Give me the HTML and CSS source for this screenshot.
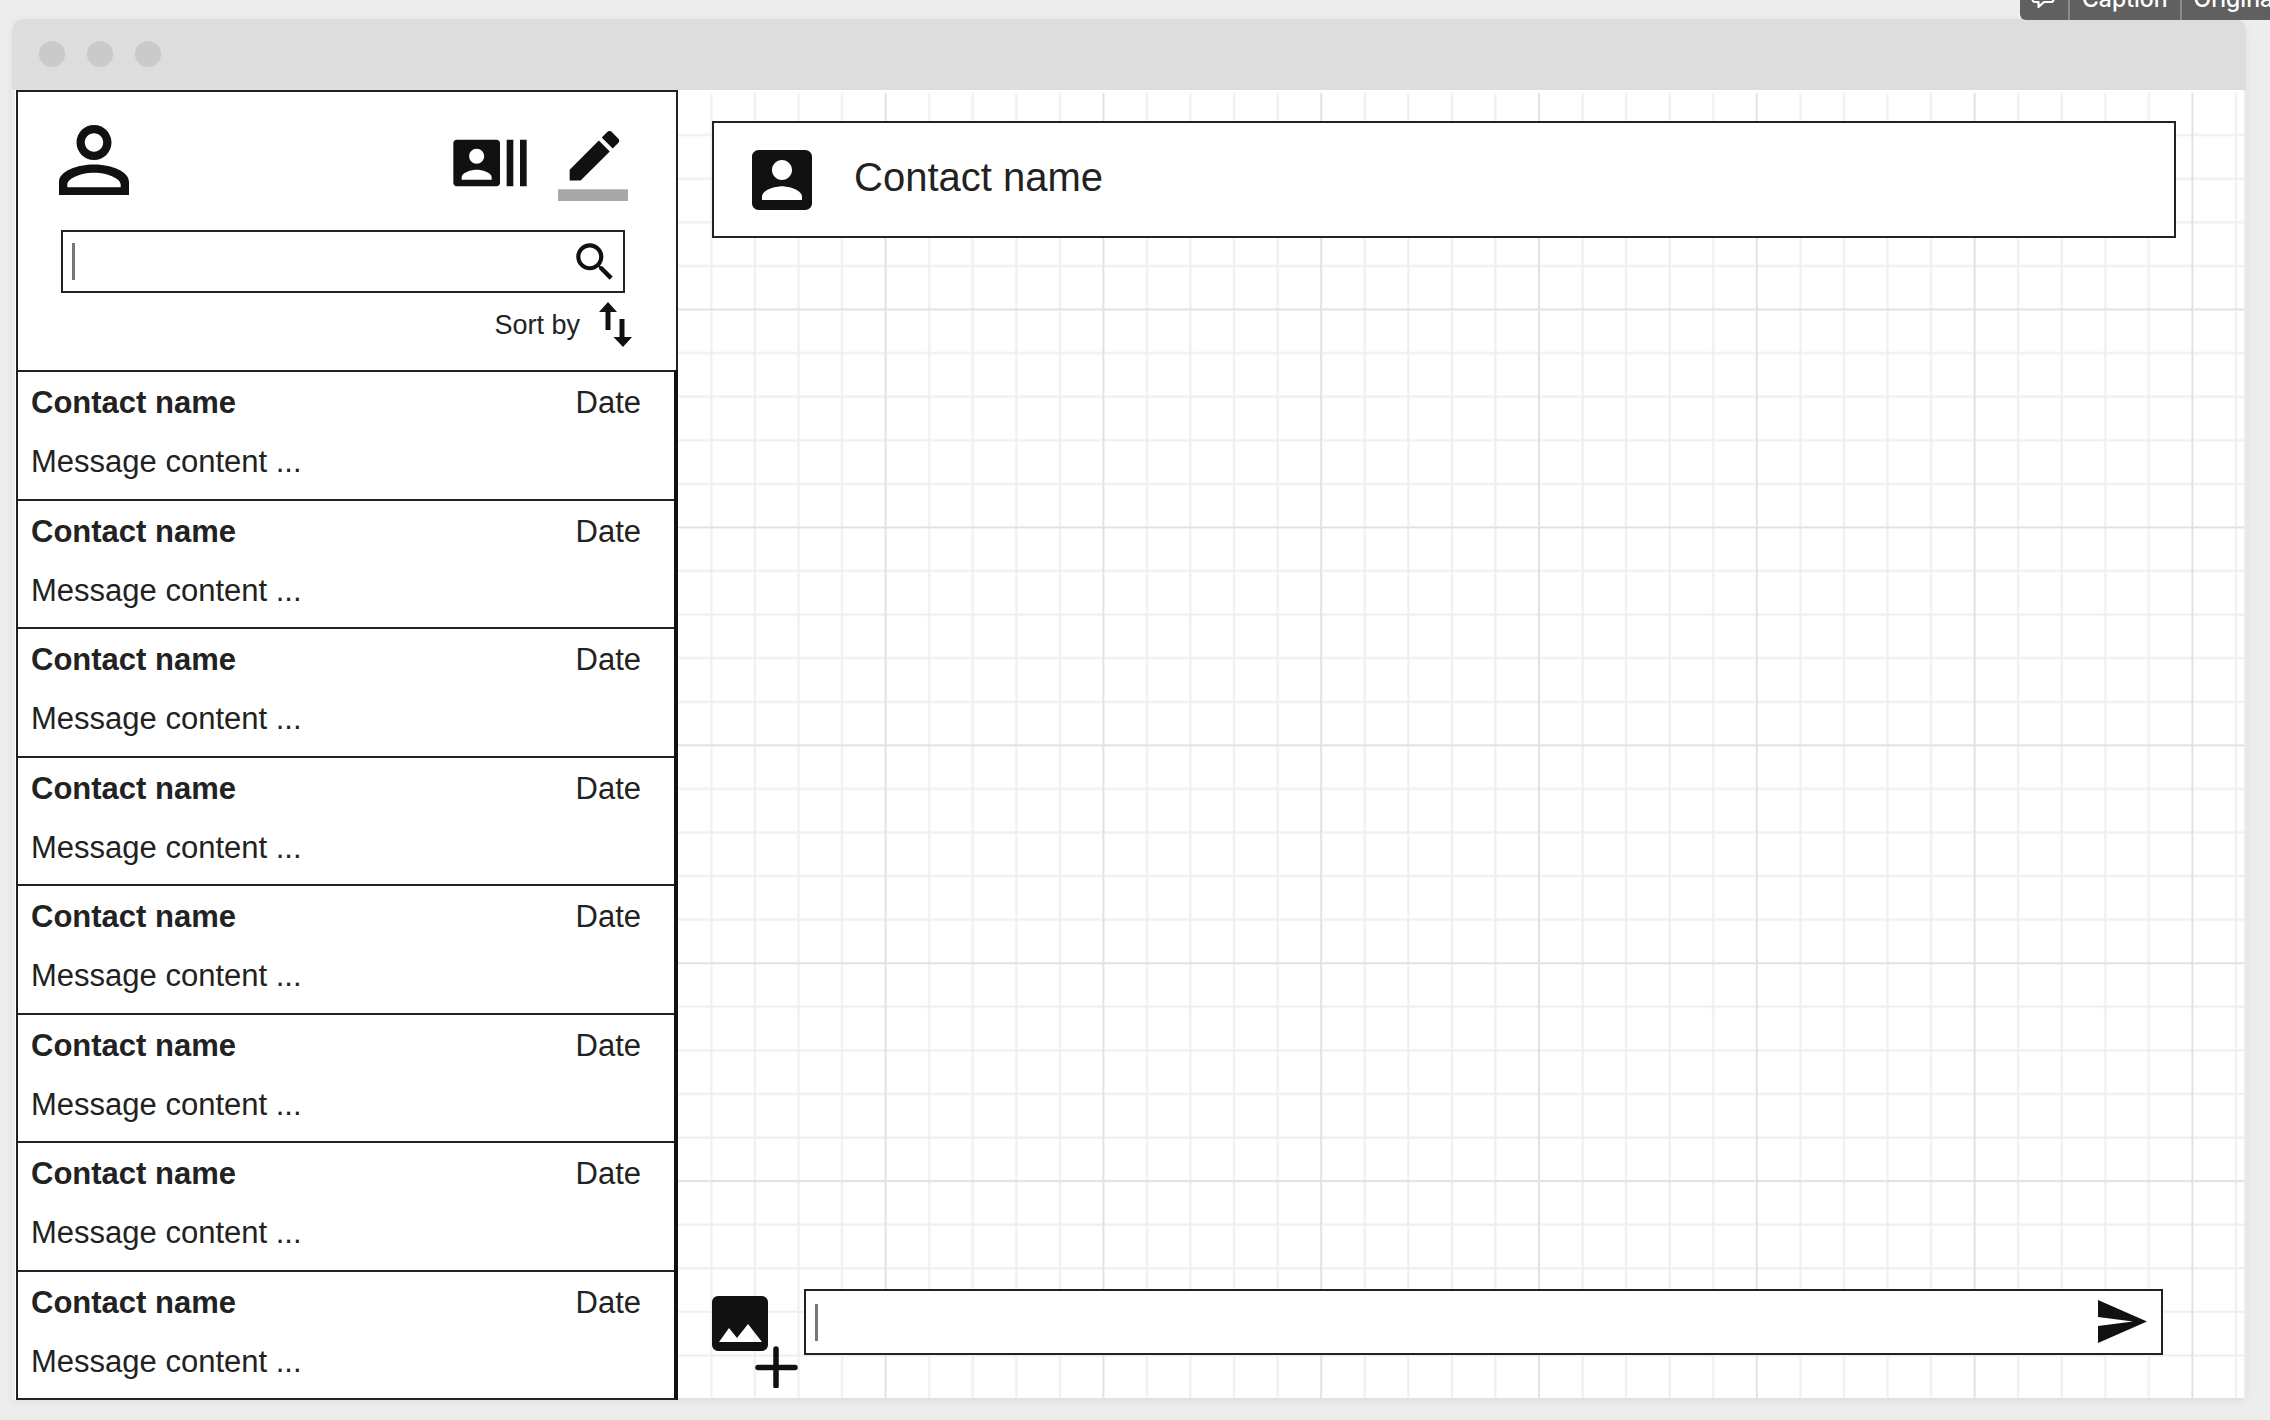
FILE: index.html
```
<!DOCTYPE html>
<html lang="en">
<head>
<meta charset="utf-8">
<title>Messages</title>
<link rel="stylesheet" href="styles.css">
</head>
<body>
<div class="toolbar">
  <button class="tool tool-icon" aria-label="Comment">
    <svg width="24" height="24" viewBox="0 0 24 24"><path d="M4 1h16a2.500 2.500 0 0 1 2.500 2.500v10a2.500 2.500 0 0 1-2.500 2.500h-7l-5.500 5v-5H4a2.500 2.500 0 0 1-2.500-2.500v-10A2.500 2.500 0 0 1 4 1z" fill="none" stroke="#fff" stroke-width="2.200" stroke-linejoin="round"/></svg>
  </button>
  <button class="tool">Caption</button>
  <button class="tool">Original</button>
</div>
<div class="window">
  <header class="titlebar"><span class="dot"></span><span class="dot"></span><span class="dot"></span></header>
  <div class="body">
    <aside class="sidebar">
      <div class="panel">
        <div class="actions">
          <button class="icon-btn profile" aria-label="Profile"><svg width="70" height="70" viewBox="4 4 16 16"><path d="M12 5.900c1.160 0 2.100.940 2.100 2.100s-.940 2.100-2.100 2.100S9.900 9.160 9.900 8s.940-2.100 2.100-2.100m0 9c3.200 0 6.100 1.400 6.100 2.700v.600H5.900v-.600c0-1.300 2.900-2.700 6.100-2.700M12 4C9.790 4 8 5.790 8 8s1.790 4 4 4 4-1.790 4-4-1.790-4-4-4zm0 9c-3.800 0-8 1.500-8 4v3h16v-3c0-2.500-4.200-4-8-4z"/></svg></button>
          <button class="icon-btn" aria-label="Contacts"><svg width="80" height="80" viewBox="0 0 24 24"><path d="M21 5v14h2V5h-2zm-4 14h2V5h-2v14zM14 5H2c-.550 0-1 .450-1 1v12c0 .550.450 1 1 1h12c.550 0 1-.450 1-1V6c0-.550-.450-1-1-1zM8 7.750c1.240 0 2.250 1.010 2.250 2.250S9.240 12.250 8 12.250 5.750 11.240 5.750 10 6.760 7.750 8 7.750zM12.500 17h-9v-.750c0-1.500 3-2.250 4.500-2.250s4.500.750 4.500 2.250V17z"/></svg></button>
          <button class="icon-btn compose" aria-label="Compose"><svg width="70" height="70" viewBox="0 0 24 24"><path d="M17.750 7L14 3.250l-10 10V17h3.750l10-10zm2.960-2.960c.390-.390.390-1.020 0-1.410L18.370.290c-.390-.390-1.020-.390-1.410 0L15 2.250 18.750 6l1.960-1.960z"/><path d="M0 20h24v4H0z" fill="#a8a8a8"/></svg></button>
        </div>
        <form class="field search">
          <span class="caret"></span>
          <input type="text" aria-label="Search">
          <button class="icon-btn" type="button" aria-label="Search"><svg width="50" height="50" viewBox="0 0 24 24"><path d="M15.500 14h-.790l-.280-.270A6.471 6.471 0 0 0 16 9.500 6.500 6.500 0 1 0 9.500 16c1.610 0 3.090-.590 4.230-1.570l.270.280v.790l5 4.990L20.490 19l-4.990-5zm-6 0C7.010 14 5 11.990 5 9.500S7.010 5 9.500 5 14 7.010 14 9.500 11.990 14 9.500 14z"/></svg></button>
        </form>
        <button class="sort">Sort by <svg width="34" height="46" viewBox="0 0 34 46"><path d="M9 0l9 10h-6.500v18h-5V10H0zM20.500 17h5v18H33l-9 10-9.500-10h6z"/></svg></button>
      </div>
      <ul class="list">
        <li><b>Contact name</b><span>Date</span><p>Message content ...</p></li>
        <li><b>Contact name</b><span>Date</span><p>Message content ...</p></li>
        <li><b>Contact name</b><span>Date</span><p>Message content ...</p></li>
        <li><b>Contact name</b><span>Date</span><p>Message content ...</p></li>
        <li><b>Contact name</b><span>Date</span><p>Message content ...</p></li>
        <li><b>Contact name</b><span>Date</span><p>Message content ...</p></li>
        <li><b>Contact name</b><span>Date</span><p>Message content ...</p></li>
        <li><b>Contact name</b><span>Date</span><p>Message content ...</p></li>
      </ul>
    </aside>
    <main class="chat">
      <svg class="grid" width="100%" height="100%" aria-hidden="true">
        <defs>
          <pattern id="cells" x="-11.200" y="0.600" width="217.800" height="217.900" patternUnits="userSpaceOnUse">
            <path d="M44.560 0v218M88.120 0v218M131.680 0v218M175.240 0v218M0 44.580h218M0 88.160h218M0 131.740h218M0 175.320h218" stroke="#eee" stroke-width="2"/>
            <path d="M1 0v218M0 1h218" stroke="#e2e2e2" stroke-width="2"/>
          </pattern>
        </defs>
        <rect y="3" width="100%" height="100%" fill="url(#cells)"/>
      </svg>
      <section class="contact">
        <svg width="60" height="60" viewBox="3 3 18 18"><path d="M3 5v14c0 1.100.890 2 2 2h14c1.100 0 2-.900 2-2V5c0-1.100-.900-2-2-2H5c-1.110 0-2 .900-2 2zm12 4c0 1.660-1.340 3-3 3s-3-1.340-3-3 1.340-3 3-3 3 1.340 3 3zm-9 8c0-2 4-3.100 6-3.100s6 1.100 6 3.100v1H6v-1z"/></svg>
        <h1>Contact name</h1>
      </section>
      <form class="composer">
        <button class="icon-btn" type="button" aria-label="Add image"><svg width="86" height="92" viewBox="0 0 86 92"><path fill-rule="evenodd" d="M7 0h43a6 6 0 0 1 6 6v43a6 6 0 0 1-6 6H6a6 6 0 0 1-6-6V6a6 6 0 0 1 6-6zM7 46h43L36 28 25 42l-8-10z"/><path d="M64 53v37M46 71.500h37" stroke="#111" stroke-width="5.500" stroke-linecap="round"/></svg></button>
        <div class="field message">
          <span class="caret"></span>
          <input type="text" aria-label="Message">
          <button class="icon-btn" type="button" aria-label="Send"><svg width="50" height="44" viewBox="0 0 50 44"><path d="M0 0l49 21.500L0 43V26l35-4.500L0 17z"/></svg></button>
        </div>
      </form>
    </main>
  </div>
</div>
</body>
</html>
```
FILE: styles.css
```
* { box-sizing: border-box; }
body {
  margin: 0;
  min-height: 100vh;
  display: flex;
  overflow: hidden;
  padding: 19px 24px 20px 12px;
  background: #ededed;
  color: #222;
  font-family: "Liberation Sans", Arial, sans-serif;
}
button, input { font: inherit; color: inherit; background: none; border: 0; padding: 0; margin: 0; }
svg { display: block; flex: none; fill: #111; }
ul, p, h1 { margin: 0; padding: 0; font-weight: normal; }

.toolbar {
  position: absolute;
  top: -38px;
  left: calc(100% - 250px);
  right: 0;
  height: 58px;
  display: flex;
  overflow: hidden;
  background: #606060;
  border-bottom-left-radius: 6px;
  color: #fff;
  font: 500 23px/58px Inter, sans-serif;
}
.tool { flex: none; padding: 8px 12px 0; border-left: 2px solid #8a8a8a; }
.tool-icon { width: 48px; padding: 14px 11px 0; border: 0; }

.window {
  flex: 1;
  display: flex;
  flex-direction: column;
  border-radius: 12px 12px 0 0;
  box-shadow: 0 2px 8px rgba(0, 0, 0, .06);
}
.titlebar {
  display: flex;
  align-items: center;
  gap: 22px;
  height: 71px;
  padding: 0 27px 2px;
  border-radius: 12px 12px 0 0;
  background: #ddd;
}
.dot { width: 26px; height: 26px; border-radius: 50%; background: #cacaca; }
.body { flex: 1; display: flex; margin: 0 2px 0 3px; background: #fff; }

.sidebar { flex: none; width: 662px; margin-left: 1px; display: flex; flex-direction: column; background: #fff; }
.panel { height: 280px; padding: 33px 51px 0 43px; border: 2px solid #222; border-bottom: 0; }
.actions { display: flex; align-items: center; height: 76px; gap: 28px; margin-right: -3px; }
.profile { margin-right: auto; margin-left: -2px; padding-bottom: 6px; }
.compose { padding-top: 6px; }
.icon-btn { flex: none; cursor: pointer; }
.field { display: flex; align-items: center; border: 2px solid #222; background: #fff; }
.field input { flex: 1; min-width: 0; height: 40px; outline: 0; font-size: 31px; }
.caret { width: 3px; height: 37px; margin-left: 9px; background: #777; }
.search { height: 63px; margin-top: 29px; }
.search .icon-btn { margin-right: 3px; }
.sort { display: flex; align-items: center; gap: 19px; margin: 9px -8px 0 auto; font-size: 27px; line-height: 46px; }

.list { flex: 1; display: flex; flex-direction: column; list-style: none; border: 2px solid #222; border-width: 0 4px 2px 2px; border-right-color: #111; }
.list li {
  flex: 1;
  display: grid;
  grid-template-columns: 1fr auto;
  align-content: start;
  padding: 1px 33px 0 13px;
  border-top: 2px solid #222;
  font-size: 31px;
  line-height: 59px;
}

.chat { position: relative; flex: 1; display: flex; flex-direction: column; justify-content: space-between; padding: 31px 68px 12px 34px; }
.grid { position: absolute; top: 0; left: 0; }
.contact { position: relative; display: flex; align-items: center; gap: 42px; height: 117px; padding: 0 38px; border: 2px solid #222; background: #fff; }
.contact h1 { font-size: 40px; line-height: 46px; padding-bottom: 6px; }
.composer { position: relative; display: flex; gap: 6px; margin-right: 13px; }
.composer > .icon-btn { padding-top: 7px; }
.message { flex: 1; height: 66px; }
.message .icon-btn { margin-right: 13px; }
```
